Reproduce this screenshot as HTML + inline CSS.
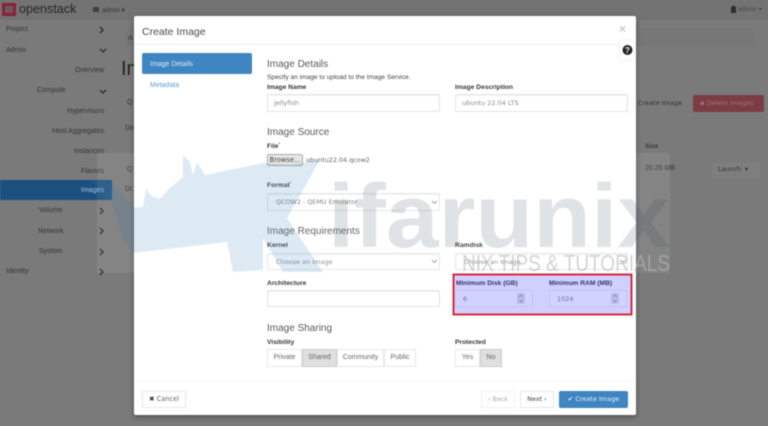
<!DOCTYPE html>
<html><head><meta charset="utf-8"><style>
html,body{margin:0;padding:0;width:768px;height:426px;overflow:hidden;background:#7a7a7a}
#p{position:relative;width:768px;height:426px;overflow:hidden;font-family:"Liberation Sans",sans-serif;filter:blur(.5px)}
.t{position:absolute;white-space:nowrap;line-height:10px;height:10px;font-size:7px;margin-top:1px}
.d{font-family:"DejaVu Sans",sans-serif}
.s{color:#333;font-size:7px}
.h{color:#5a5a5a;font-size:10px;line-height:12px;height:12px;margin-top:3px}
.b{font-weight:bold;color:#3a3a3a;font-size:6.7px;margin-top:2px}
.i{position:absolute;box-sizing:border-box;background:#fff;border:1px solid #e4e4e4;border-radius:2px;height:18px;box-shadow:inset 0 1px 1px #f2f2f2}
.v{color:#8a8a8a;font-family:"DejaVu Sans",sans-serif;font-size:6.5px}
.btn{position:absolute;box-sizing:border-box;background:#fff;border:1px solid #e8e8e8;text-align:center;color:#666;font-size:7px;font-family:"DejaVu Sans",sans-serif}
svg{position:absolute;left:0;top:0}
</style></head><body><div id="p">
<div style="position:absolute;left:0;top:0;width:768px;height:20px;background:#737373"></div>
<div style="position:absolute;left:112px;top:20px;width:656px;height:406px;background:#7a7a7a"></div>
<div style="position:absolute;left:125px;top:28px;width:630px;height:18px;background:#777"></div>
<div style="position:absolute;left:2px;top:3px;width:14px;height:13px;box-sizing:border-box;border:3px solid #8a2137;background:#6d5a5f"></div>
<div class="t" style="left:19px;top:1px;font-size:12.6px;line-height:15px;height:15px;color:#262626">openstack</div>
<div style="position:absolute;left:93px;top:7px;width:6px;height:5px;background:#3f3f3f"></div>
<div class="t s" style="left:102px;top:5px;font-size:6.5px">admin ▾</div>
<div style="position:absolute;left:731px;top:6px;width:5px;height:7px;background:#2e2e2e;border-radius:2px 2px 0 0"></div>
<div class="t s d" style="left:738px;top:4px;font-size:6px;color:#444">admin ▾</div>

<div class="t s" style="left:6px;top:24px">Project</div>
<div class="t s" style="left:6px;top:45px">Admin</div>
<div class="t s" style="right:664px;top:65px">Overview</div>
<div class="t s" style="left:37px;top:85px">Compute</div>
<div class="t s" style="right:664px;top:106px">Hypervisors</div>
<div class="t s" style="right:664px;top:126px">Host Aggregates</div>
<div class="t s" style="right:664px;top:146px">Instances</div>
<div class="t s" style="right:664px;top:166px">Flavors</div>
<div style="position:absolute;left:0;top:180px;width:112px;height:20px;background:#1b4f7f"></div>
<div class="t" style="right:664px;top:185px;color:#a9c4dc">Images</div>
<div class="t s" style="left:39px;top:205px">Volume</div>
<div class="t s" style="left:38px;top:226px">Network</div>
<div class="t s" style="left:39px;top:246px">System</div>
<div class="t s" style="left:6px;top:266px">Identity</div>
<svg width="768" height="426" fill="none" stroke="#2a2a2a" stroke-width="1.3">
<path d="M100 27l3 3-3 3M100 49l3 3 3-3M100 90l3 3 3-3M100 208l3 3-3 3M100 228l3 3-3 3M100 249l3 3-3 3M100 269l3 3-3 3"/>
</svg>

<div class="t" style="left:128px;top:33px;color:#333">A</div>
<div class="t" style="left:121px;top:56px;font-size:20px;line-height:24px;height:24px;color:#222">Im</div>
<div class="t s" style="left:127px;top:97px">Q</div>
<div class="t s" style="left:125px;top:123px">Dis</div>
<div class="t s" style="left:127px;top:164px">Q</div>
<div class="t s" style="left:125px;top:184px">Di</div>
<div class="t s d" style="left:638px;top:97px;font-size:6.5px">Create Image</div>
<div style="position:absolute;left:693px;top:95px;width:71px;height:17px;background:#7a3d43;border-radius:2px"></div>
<div class="t d" style="left:700px;top:97px;font-size:6.5px;color:#a87078">▪ Delete Images</div>
<div class="t b" style="left:645px;top:140px">Size</div>
<div class="t s" style="left:645px;top:163px">20.25 MB</div>
<div style="position:absolute;left:712px;top:162px;width:48px;height:17px;background:#7e7e7e;border-radius:2px"></div>
<div class="t s d" style="left:718px;top:164px;font-size:6.3px">Launch &nbsp;▾</div>

<div style="position:absolute;left:134px;top:16px;width:502px;height:399px;background:#fff;border-radius:2px;box-shadow:0 2px 6px rgba(0,0,0,.35)"></div>
<div class="t" style="left:142px;top:25px;font-size:10.5px;line-height:12px;height:12px;color:#4a4a4a">Create Image</div>
<div class="t" style="left:619px;top:22px;font-size:12px;line-height:12px;height:12px;font-weight:bold;color:#c9c9c9">×</div>
<div style="position:absolute;left:135px;top:44px;width:500px;height:1px;background:#f0f0f0"></div>
<div style="position:absolute;left:620px;top:40px;width:14px;height:20px;background:#fff;box-shadow:0 0 2px #ddd"></div>
<svg width="768" height="426"><circle cx="627.500" cy="50" r="5" fill="#222"/><text x="627.500" y="53" text-anchor="middle" font-family="Liberation Sans" font-weight="bold" font-size="8" fill="#fff">?</text></svg>

<div style="position:absolute;left:142px;top:53px;width:110px;height:21px;background:#3f85c2;border-radius:2px"></div>
<div class="t" style="left:150px;top:58.500px;color:#dce9f5">Image Details</div>
<div class="t" style="left:150px;top:80px;color:#5f9fd6">Metadata</div>

<div class="t h" style="left:267px;top:56px">Image Details</div>
<div class="t" style="left:267px;top:72px;font-size:6.600px;color:#444">Specify an image to upload to the Image Service.</div>
<div class="t b" style="left:267px;top:81px">Image Name</div>
<div class="i" style="left:267px;top:94px;width:173px"></div>
<div class="t v" style="left:274px;top:97px">jellyfish</div>
<div class="t b" style="left:455px;top:81px">Image Description</div>
<div class="i" style="left:455px;top:94px;width:173px"></div>
<div class="t v" style="left:462px;top:97px">ubuntu 22.04 LTS</div>

<div class="t h" style="left:267px;top:124px">Image Source</div>
<div class="t b" style="left:267px;top:140px">File<sup style="font-size:4px;line-height:0">*</sup></div>
<div style="position:absolute;box-sizing:border-box;left:267px;top:154px;width:36px;height:12px;background:#e4e4e4;border:1px solid #a8a8a8;border-radius:2px;color:#333;font:6.700px/10px 'DejaVu Sans',sans-serif;text-align:center">Browse...</div>
<div class="t d" style="left:306px;top:154px;font-size:6.400px;color:#555">ubuntu22.04.qcow2</div>

<div class="t b" style="left:267px;top:179px">Format<sup style="font-size:4px;line-height:0">*</sup></div>
<div class="i" style="left:267px;top:193px;width:173px;background:rgba(255,255,255,.6)"></div>
<div class="t v" style="left:276px;top:196px;font-size:6.400px;color:#777">QCOW2 - QEMU Emulator</div>
<div class="t h" style="left:267px;top:223px">Image Requirements</div>
<div class="t b" style="left:267px;top:239px">Kernel</div>
<div class="i" style="left:267px;top:253px;width:173px;height:17px"></div>
<div class="t v" style="left:276px;top:255.500px">Choose an Image</div>
<div class="t b" style="left:455px;top:239px">Ramdisk</div>
<div class="i" style="left:455px;top:253px;width:173px;height:17px"></div>
<div class="t v" style="left:464px;top:255.500px">Choose an Image</div>
<svg width="768" height="426" fill="none" stroke="#999" stroke-width=".9"><path d="M432 201l2.500 2.500 2.500-2.500M432 260l2.500 2.500 2.500-2.500M620 260l2.500 2.500 2.500-2.500"/></svg>
<div class="t b" style="left:267px;top:277px">Architecture</div>
<div class="i" style="left:267px;top:290px;width:173px;height:17px"></div>

<div class="t h" style="left:267px;top:320px">Image Sharing</div>
<div class="t b" style="left:267px;top:336px">Visibility</div>
<div class="btn" style="left:267px;top:349px;width:35px;height:18px;line-height:16px;font-family:'Liberation Sans'">Private</div>
<div class="btn" style="left:302px;top:349px;width:35px;height:18px;line-height:16px;background:#dfdfdf;border-color:#ccc;font-family:'Liberation Sans'">Shared</div>
<div class="btn" style="left:337px;top:349px;width:47px;height:18px;line-height:16px;font-family:'Liberation Sans'">Community</div>
<div class="btn" style="left:384px;top:349px;width:32px;height:18px;line-height:16px;font-family:'Liberation Sans'">Public</div>
<div class="t b" style="left:455px;top:336px">Protected</div>
<div class="btn" style="left:455px;top:349px;width:25px;height:18px;line-height:16px;font-family:'Liberation Sans'">Yes</div>
<div class="btn" style="left:480px;top:349px;width:22px;height:18px;line-height:16px;background:#dfdfdf;border-color:#ccc;font-family:'Liberation Sans'">No</div>

<div style="position:absolute;left:135px;top:381px;width:500px;height:1px;background:#f6f6f6"></div>
<div class="btn" style="left:142px;top:391px;width:44px;height:17px;line-height:15px;font-size:6.600px"><b style="color:#333">✖</b> Cancel</div>
<div class="btn" style="left:481px;top:391px;width:34px;height:17px;line-height:15px;color:#aaa;border-color:#f0f0f0;font-size:6.400px">‹ Back</div>
<div class="btn" style="left:520px;top:391px;width:34px;height:17px;line-height:15px;color:#444;font-size:6.400px">Next ›</div>
<div class="btn" style="left:559px;top:391px;width:69px;height:17px;line-height:17px;border:0;background:#3f85c2;border-radius:2px;color:#e4eff8;font-size:6.500px">✔ Create Image</div>

<svg width="768" height="426">
<rect x="97" y="153" width="573" height="120" fill="#fff" opacity=".08"/>
<path d="M90 180L110 182 135 208 143 207 146 189 151 196 160 199 170 188 183 177 183 155 190 162 193 175 197 162 205 175 263 163 290 165 320 160 287 218 323 272 283 272 263 238 263 270 233 272 227 242 133 253 122 238 113 205Z" fill="#2f7fb5" opacity=".16"/>
<text x="328" y="247" font-family="Liberation Sans" font-weight="bold" font-size="90" textLength="342" lengthAdjust="spacingAndGlyphs" fill="#2f4a5c" opacity=".15">ifarunix</text>
<text x="462" y="271" font-family="Liberation Sans" font-size="23" textLength="208" lengthAdjust="spacingAndGlyphs" fill="#b8b8b8" opacity=".6">NIX TIPS &amp; TUTORIALS</text>
</svg>

<div style="position:absolute;left:453px;top:274px;width:179px;height:41px;background:#d0d0ff"></div>
<div class="t b" style="left:456px;top:277px;color:#33336b">Minimum Disk (GB)</div>
<div class="t b" style="left:549px;top:277px;color:#33336b">Minimum RAM (MB)</div>
<div style="position:absolute;box-sizing:border-box;left:455px;top:290px;width:78px;height:17px;background:#d2d2ff;border:1px solid #c2c2f0;border-radius:2px"></div>
<div style="position:absolute;box-sizing:border-box;left:549px;top:290px;width:78px;height:17px;background:#d2d2ff;border:1px solid #c2c2f0;border-radius:2px"></div>
<div class="t d" style="left:463px;top:293px;font-size:6.500px;color:#70709a">6</div>
<div class="t d" style="left:557px;top:293px;font-size:6.500px;color:#70709a">1024</div>
<div style="position:absolute;left:517px;top:293px;width:8px;height:11px;background:#bcbce8"></div>
<div style="position:absolute;left:611px;top:293px;width:8px;height:11px;background:#bcbce8"></div>
<svg width="768" height="426" fill="none" stroke="#7878a8" stroke-width=".7"><path d="M519 297l2-2 2 2M519 300l2 2 2-2M613 297l2-2 2 2M613 300l2 2 2-2"/></svg>
<svg width="768" height="426" fill="none"><rect x="453.500" y="274.500" width="178" height="40" stroke="#dc1428" stroke-width="1.800"/></svg>
</div></body></html>
